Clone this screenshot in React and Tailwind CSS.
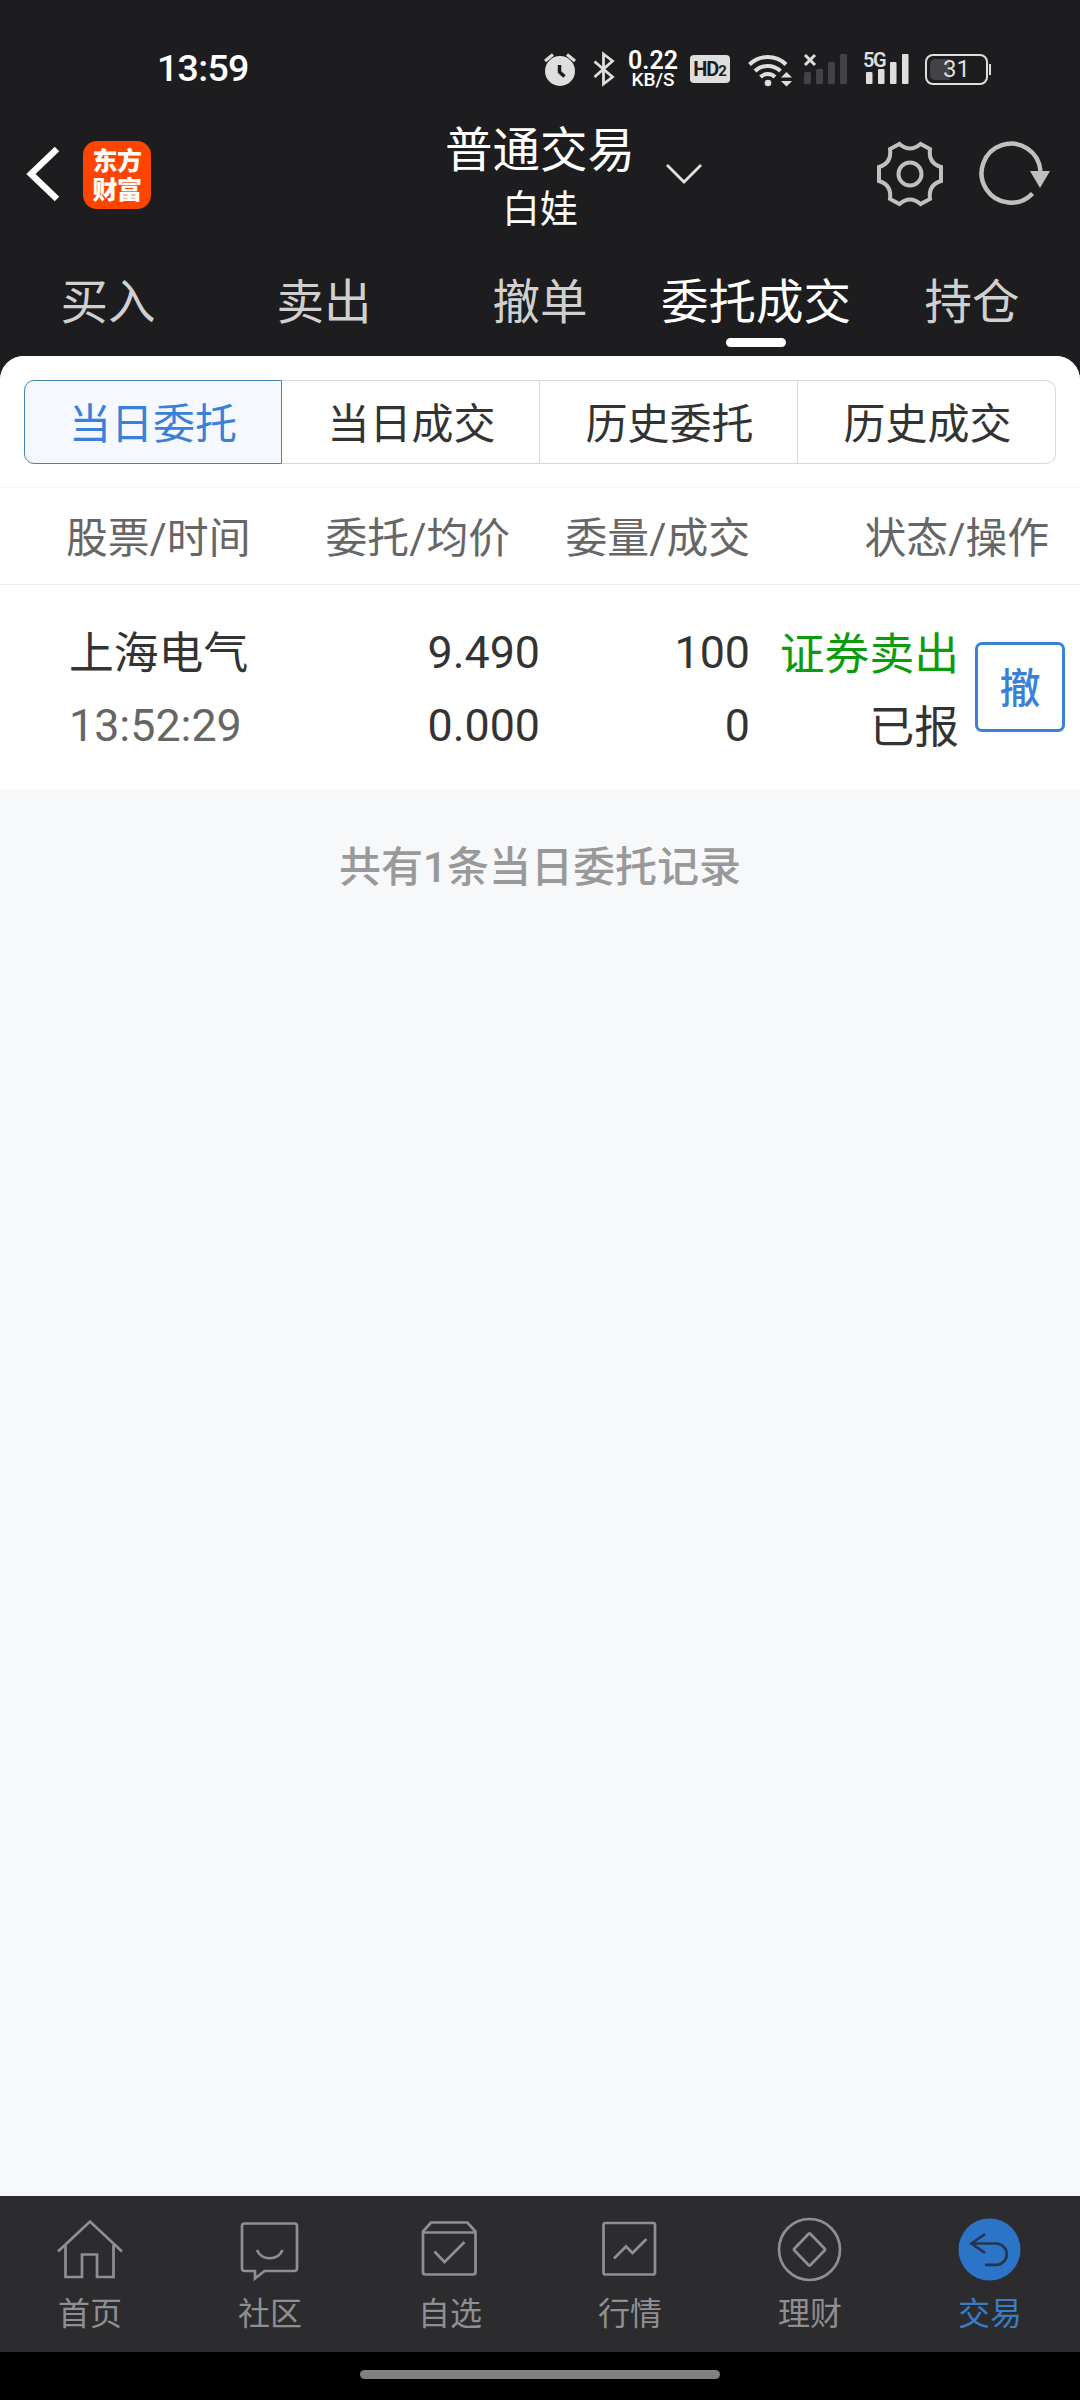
import clsx from 'clsx'

const tradeTabs = ['买入', '卖出', '撤单', '委托成交', '持仓']
const recordTabs = ['当日委托', '当日成交', '历史委托', '历史成交']

const orders = [
  {
    name: '上海电气',
    time: '13:52:29',
    price: '9.490',
    avgPrice: '0.000',
    amount: '100',
    filled: '0',
    side: '证券卖出',
    status: '已报',
  },
]

const navItems = [
  {
    label: '首页',
    icon: (
      <>
        <path d="M4 37.5 36 7.5l32 30" />
        <path d="M11.5 31v32H28V40.5h15V63h16.5V31" />
      </>
    ),
  },
  {
    label: '社区',
    icon: (
      <>
        <path d="M10.500 9.500h50a2.500 2.500 0 0 1 2.500 2.500v42.500a2.500 2.500 0 0 1-2.500 2.500H30.500L21 64.500V57H10.500A2.500 2.500 0 0 1 8 54.500V12a2.500 2.500 0 0 1 2.500-2.500Z" />
        <path d="M23 36c4 11 21 11 25.500 0" />
      </>
    ),
  },
  {
    label: '自选',
    icon: (
      <>
        <path d="M9 17.500 17 8.500h36.500l8 9V58a2.500 2.500 0 0 1-2.500 2.500H11.500A2.500 2.500 0 0 1 9 58Z" />
        <path d="M9 18.500h52.500M20.500 37.500 30.500 48l20-20" />
      </>
    ),
  },
  {
    label: '行情',
    icon: (
      <>
        <rect x="9.5" y="9" width="51.5" height="51.5" rx="2" />
        <path d="M20 44.500 32 32.500l6.500 6.500L52.500 25" />
      </>
    ),
  },
  {
    label: '理财',
    icon: (
      <>
        <circle cx="35.5" cy="35.5" r="30.5" />
        <path d="M34.500 20 20.500 34.500q-1 1 0 2L34.500 51q1 1 2 0L50.500 36.500q1-1 0-2L36.500 20q-1-1-2 0Z" />
      </>
    ),
  },
  {
    label: '交易',
    active: true,
    icon: (
      <>
        <circle cx="35.5" cy="35.5" r="31" fill="#2b74c8" stroke="none" />
        <path d="M31 20 17.500 29.500 31 39M17.500 29.500H42a10.700 10.700 0 0 1 0 21.400H31" stroke="#25364a" />
      </>
    ),
  },
]

const StatusBar = () => (
  <div className="flex h-[112px] items-center pt-[26px] pl-[157px] text-[#dedede]">
    <span className="w-[386px] text-[37.5px] leading-none font-medium tracking-[-0.7px] text-white">13:59</span>
    <svg width="34" height="36" viewBox="0 0 34 36">
      <circle cx="17" cy="20" r="15" fill="currentColor" />
      <path d="M2 10 10 3.500M32 10 24 3.500" stroke="currentColor" strokeWidth="3" />
      <path d="M16.500 14v7l5 4.500" fill="none" stroke="#1d1d1f" strokeWidth="3.5" />
    </svg>
    <svg className="ml-[16px]" width="22" height="36" viewBox="0 0 22 36" fill="none" stroke="currentColor" strokeWidth="2.8">
      <path d="M1.500 10.500 19.500 26 10.500 33V3l9 7L1.500 26" />
    </svg>
    <div className="ml-[12px] flex w-[52px] flex-col items-center text-white">
      <span className="text-[25px] leading-[20px] font-semibold">0.22</span>
      <span className="text-[19px] leading-[17px] font-medium">KB/S</span>
    </div>
    <div className="ml-[11px] flex h-[28px] w-[40px] items-center justify-center rounded-[4px] bg-[#dedede] leading-none font-bold text-[#1d1d1f]">
      <span className="text-[20px] tracking-[-1px]">HD</span>
      <span className="pt-[5px] text-[15px]">2</span>
    </div>
    <svg className="ml-[17px]" width="46" height="36" viewBox="0 0 46 36" fill="none" stroke="currentColor" strokeWidth="4">
      <path d="M2.500 13.500a26 26 0 0 1 36.500 0M8 20a18.500 18.500 0 0 1 25.500 0M13.500 26a10.500 10.500 0 0 1 14.500 0" />
      <circle cx="21" cy="32" r="3.3" fill="currentColor" stroke="none" />
      <path d="m34 26.500 5.500-5.500 5.500 5.500ZM34 30l5.500 5.500L45 30Z" fill="currentColor" stroke="none" />
    </svg>
    <svg className="ml-[10px]" width="44" height="36" viewBox="0 0 44 36">
      <path d="m2 4 10 10M12 4 2 14" stroke="currentColor" strokeWidth="3" />
      <g fill="#434345">
        <rect x="1" y="21" width="7" height="12" rx="1.5" />
        <rect x="13" y="18" width="7" height="15" rx="1.5" />
        <rect x="25" y="11" width="7" height="22" rx="1.5" />
        <rect x="37" y="3" width="7" height="30" rx="1.5" />
      </g>
    </svg>
    <div className="relative ml-[16px]">
      <svg width="48" height="36" viewBox="0 0 48 36" fill="currentColor">
        <rect x="3" y="21" width="6.5" height="12" rx="1" />
        <rect x="15" y="18" width="6.5" height="15" rx="1" />
        <rect x="27" y="11" width="6.5" height="22" rx="1" />
        <rect x="39" y="3" width="6.5" height="30" rx="1" />
      </svg>
      <span className="absolute -top-[1px] left-0 text-[20px] leading-none font-semibold tracking-[-1.5px]">5G</span>
    </div>
    <div className="relative ml-[14px] flex h-[31px] w-[63px] items-center justify-center rounded-[8px] border-2 border-[#dedede]">
      <span className="absolute top-[3px] left-[3px] h-[21px] w-[20px] rounded-l-[5px] bg-[#434345]" />
      <span className="relative text-[24px] leading-none">31</span>
    </div>
    <span className="ml-[1px] h-[11px] w-[2px] bg-[#dedede]" />
  </div>
)

const TitleBar = () => (
  <header className="flex h-[128px] items-start">
    <svg className="mt-[34px] ml-[26px]" width="36" height="56" viewBox="0 0 36 56" fill="none" stroke="#fff" strokeWidth="6.5">
      <path d="M31 3 5 28l26 25" />
    </svg>
    <div className="mt-[29px] ml-[21px] flex h-[68px] w-[68px] flex-col items-center justify-center rounded-[14px] bg-[#ff4400] pt-[1px] text-[25px] leading-[29px] font-black tracking-[-0.5px] text-white">
      <span>东方</span>
      <span>财富</span>
    </div>
    <div className="ml-[293px] flex w-[192px] flex-col items-center whitespace-nowrap text-white">
      <h1 className="mt-[11px] text-[47.5px] leading-[56px] font-normal">普通交易</h1>
      <span className="mt-[6px] text-[38px] leading-[48px]">白娃</span>
    </div>
    <svg className="mt-[50px] ml-[29px]" width="38" height="24" viewBox="0 0 38 24" fill="none" stroke="#e2e2e2" strokeWidth="2.8">
      <path d="m2 3 17 17L36 3" />
    </svg>
    <svg className="mt-[28px] ml-[173px]" width="68" height="68" viewBox="-34 -34 68 68" fill="none" stroke="#c0c0c0" strokeWidth="4">
      <circle r="11.5" />
      <path d="M-10.500-30Q0-21 10.500-30L20-25Q18-11 31-7V7Q18 11 20 25L10.500 30Q0 21-10.500 30L-20 25Q-18 11-31 7V-7Q-18-11-20-25Z" />
    </svg>
    <svg className="mt-[28px] ml-[34px]" width="74" height="68" viewBox="0 0 74 68" fill="none" stroke="#c0c0c0" strokeWidth="4.5">
      <path d="M62.500 31A29.500 29.500 0 1 0 54.500 53.500" />
      <path d="M52 31h20L62 48Z" fill="#c0c0c0" stroke="none" />
    </svg>
  </header>
)

const TradeTabs = ({ current }) => (
  <nav className="grid h-[116px] grid-cols-5">
    {tradeTabs.map((tab) => (
      <div
        key={tab}
        className={clsx(
          'flex flex-col items-center pt-[33px] text-[47.5px] leading-[60px] whitespace-nowrap',
          tab === current ? 'text-white' : 'text-[#d0d0d0]'
        )}
      >
        <span>{tab}</span>
        {tab === current && <span className="mt-[5px] h-[9px] w-[60px] rounded-full bg-white" />}
      </div>
    ))}
  </nav>
)

const RecordTabs = ({ current }) => (
  <div className="mx-[24px] grid h-[84px] grid-cols-4">
    {recordTabs.map((tab) => (
      <button
        key={tab}
        className={clsx(
          'border pt-[5px] text-[42px] leading-none first:rounded-l-[10px] last:rounded-r-[10px]',
          tab === current
            ? 'border-[#4784b4] bg-[#f5f9ff] text-[#3a80d8]'
            : 'border-l-0 border-[#d5d9da] pl-[2px] text-[#333]'
        )}
      >
        {tab}
      </button>
    ))}
  </div>
)

const OrderRow = ({ order }) => (
  <div className="flex h-[204px] pt-[31px] text-[44.8px] leading-[73px] text-[#333]">
    <div className="w-[300px] pl-[69px]">
      <p className="pt-[2px] leading-[71px]">{order.name}</p>
      <p className="text-[#666]">{order.time}</p>
    </div>
    <div className="w-[240px] text-right">
      <p>{order.price}</p>
      <p>{order.avgPrice}</p>
    </div>
    <div className="w-[210px] text-right">
      <p>{order.amount}</p>
      <p>{order.filled}</p>
    </div>
    <div className="w-[209px] pt-[2px] text-right">
      <p className="text-[#0a9c0a]">{order.side}</p>
      <p>{order.status}</p>
    </div>
    <button className="mt-[26px] ml-[16px] h-[90px] w-[90px] rounded-[7px] border-3 border-[#3a80d8] pt-[5px] text-[41px] leading-none font-medium text-[#3a80d8]">
      撤
    </button>
  </div>
)

const BottomNav = () => (
  <footer>
    <div className="grid h-[156px] grid-cols-6 bg-[#2c2c2e]">
      {navItems.map((item) => (
        <div key={item.label} className="flex flex-col items-center pt-[18px]">
          <svg width="72" height="72" viewBox="0 0 72 72" fill="none" stroke="#8f8f93" strokeWidth="2.7">
            {item.icon}
          </svg>
          <span
            className={clsx(
              'mt-[8px] text-[32px] leading-[40px]',
              item.active ? 'text-[#3a7cc8]' : 'text-[#8f8f93]'
            )}
          >
            {item.label}
          </span>
        </div>
      ))}
    </div>
    <div className="flex h-[48px] justify-center bg-black pt-[18px]">
      <span className="h-[9px] w-[360px] rounded-full bg-[#808080]" />
    </div>
  </footer>
)

const App = () => {
  return (
    <div className="flex h-[2400px] w-[1080px] flex-col bg-[#1d1d1f] font-[Roboto,'Noto_Sans_CJK_SC',sans-serif]">
      <StatusBar />
      <TitleBar />
      <TradeTabs current="委托成交" />
      <main className="flex-1 overflow-hidden rounded-t-[24px] bg-[#f7f8fa]">
        <section className="bg-white pt-[24px]">
          <RecordTabs current="当日委托" />
          <div className="mt-[23px] flex h-[98px] items-center border-y border-t-[#f6f6f6] border-b-[#ebebeb] pt-[5px] text-[41.8px] leading-none text-[#666]">
            <span className="w-[300px] pl-[66px]">股票/时间</span>
            <span className="w-[210px] text-right">委托/均价</span>
            <span className="w-[240px] text-right">委量/成交</span>
            <span className="w-[299px] text-right">状态/操作</span>
          </div>
          {orders.map((order) => (
            <OrderRow key={order.time} order={order} />
          ))}
        </section>
        <p className="mt-[54px] text-center text-[42px] leading-[50px] font-medium text-[#999]">
          共有1条当日委托记录
        </p>
      </main>
      <BottomNav />
    </div>
  )
}

export default App
